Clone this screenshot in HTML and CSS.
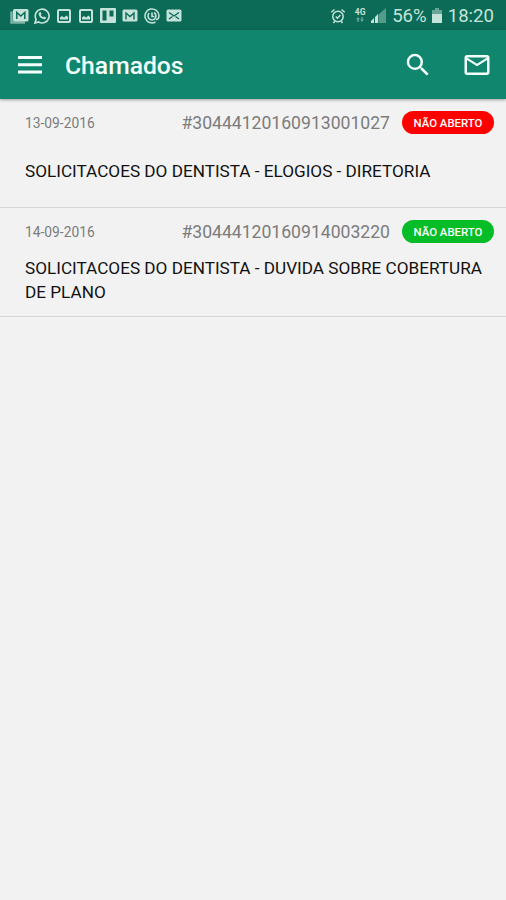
FILE: index.html
```html
<!DOCTYPE html>
<html lang="pt-BR">
<head>
    <meta charset="UTF-8">
    <meta name="viewport" content="width=device-width, initial-scale=1.0">
    <title>Chamados</title>
    <link rel="stylesheet" href="styles.css">
</head>
<body>
    <div class="status-bar">
        <div class="notifications">
            <svg class="wide" width="20" height="16" viewBox="0 0 20 16">
                <path d="M1.500 3.500v11H15" fill="none" stroke="currentColor" stroke-width="2.500" opacity=".6"/>
                <rect x="3" y="1" width="15.500" height="12.500" rx="1.500" fill="currentColor"/>
                <path d="M6.800 11V4.500l4 3.500 4-3.500V11" fill="none" stroke="#0b6b56" stroke-width="1.500"/>
            </svg>
            <svg width="16" height="16" viewBox="0 0 16 16" fill="none" stroke="currentColor">
                <path d="M1 15l1.100-3.700A6.900 6.900 0 1 1 4.700 14z" stroke-width="1.700"/>
                <path d="M5.200 4.400l1.500-.3.800 2-.8.900c.6 1.100 1.400 1.800 2.500 2.300l1-.9 1.900 1c-.2 1.500-1.300 2-2.600 1.700C7 10.400 5.300 8.800 4.700 6.400c-.1-.8 0-1.500.5-2z" fill="currentColor" stroke="none"/>
            </svg>
            <svg width="16" height="16" viewBox="0 0 16 16">
                <rect x="2" y="2" width="12" height="12" rx="1" fill="none" stroke="currentColor" stroke-width="2"/>
                <path d="M4 11.500V9.500l2-1.500 2 1.500 2.500-2L12 9v2.500z" fill="currentColor"/>
            </svg>
            <svg width="16" height="16" viewBox="0 0 16 16">
                <rect x="2" y="2" width="12" height="12" rx="1" fill="none" stroke="currentColor" stroke-width="2"/>
                <path d="M4 11.500V9.500l2-1.500 2 1.500 2.500-2L12 9v2.500z" fill="currentColor"/>
            </svg>
            <svg width="16" height="16" viewBox="0 0 16 16">
                <path fill="currentColor" fill-rule="evenodd" d="M1 0h14a1 1 0 0 1 1 1v13a1 1 0 0 1-1 1H1a1 1 0 0 1-1-1V1a1 1 0 0 1 1-1zM2.500 2.500v10h4V2.500zM9.500 2.500v6h4V2.500z"/>
            </svg>
            <svg width="16" height="16" viewBox="0 0 16 16">
                <rect x="0.500" y="1.500" width="15" height="12" rx="1.500" fill="currentColor"/>
                <path d="M4 11.500V5L8 8.500 12 5v6.500" fill="none" stroke="#0b6b56" stroke-width="1.400"/>
            </svg>
            <svg width="16" height="16" viewBox="0 0 16 16" fill="none" stroke="currentColor">
                <path d="M11.500 14A7 7 0 1 1 15 7.500c0 3-1.500 4.300-3.200 3.800" stroke-width="1.500"/>
                <path d="M5.300 5A4 4 0 1 0 12 8c0-1.700-.8-2.800-2-3.500M8 4.500v4h2.500" stroke-width="1.600"/>
            </svg>
            <svg width="16" height="16" viewBox="0 0 16 16">
                <rect x="0.500" y="1.500" width="15" height="12" rx="1.500" fill="currentColor"/>
                <path d="M3 4.500l5 3.500 5-3.500M3 11l3.500-2.500M13 11L9.500 8.500" fill="none" stroke="#0b6b56" stroke-width="1.400"/>
            </svg>
        </div>
        <div class="system">
            <svg class="alarm" width="16" height="16" viewBox="0 0 16 16" fill="none" stroke="currentColor" stroke-width="1.500">
                <circle cx="8" cy="8.500" r="5.200"/>
                <path d="M1.300 4.300L4.500 1.500M14.700 4.300L11.500 1.500M3.500 15l1.200-1.700M12.500 15l-1.200-1.700M5.700 8.500l1.700 1.700 3-3.200"/>
            </svg>
            <div class="network">
                <span>4G</span>
                <svg width="8" height="6" viewBox="0 0 8 6" fill="currentColor" opacity=".5">
                    <path d="M2 0l2 2.500H2.700V5H1.300V2.500H0zM6 5L4 2.500h1.300V0h1.400v2.500H8z"/>
                </svg>
            </div>
            <svg class="signal" width="15" height="15" viewBox="0 0 15 15" fill="currentColor">
                <path d="M0 15v-2l3-3v5zM4 15V9l3-3v9z"/>
                <path d="M7.500 15V6.500L15 0v15z" opacity=".4"/>
            </svg>
            <span class="percent">56%</span>
            <svg class="battery" width="10" height="15" viewBox="0 0 10 15" fill="currentColor">
                <path d="M3 0h4v2h3v4H0V2h3z" opacity=".5"/>
                <path d="M0 6h10v9H0z"/>
            </svg>
            <span class="time">18:20</span>
        </div>
    </div>

    <header class="toolbar">
        <svg class="menu" width="24" height="18" viewBox="0 0 24 18" fill="currentColor">
            <path d="M0 0h24v3H0zM0 7.200h24v3H0zM0 14.400h24v3H0z"/>
        </svg>
        <h1>Chamados</h1>
        <svg class="search" width="30" height="30" viewBox="0 0 24 24" fill="currentColor">
            <path d="M15.500 14h-.79l-.28-.27A6.471 6.471 0 0 0 16 9.500 6.500 6.500 0 1 0 9.500 16c1.610 0 3.090-.59 4.230-1.570l.27.28v.79l5 4.990L20.490 19l-4.990-5zm-6 0C7.010 14 5 11.990 5 9.500S7.010 5 9.500 5 14 7.010 14 9.500 11.990 14 9.500 14z"/>
        </svg>
        <svg width="30" height="30" viewBox="0 0 24 24" fill="currentColor">
            <path d="M20 4H4c-1.100 0-1.990.9-1.990 2L2 18c0 1.100.9 2 2 2h16c1.100 0 2-.9 2-2V6c0-1.100-.9-2-2-2zm0 14H4V8l8 5 8-5v10zm-8-7L4 6h16l-8 5z"/>
        </svg>
    </header>

    <main>
        <div class="ticket">
            <div class="ticket-header">
                <span class="date">13-09-2016</span>
                <span class="protocol">#30444120160913001027</span>
                <span class="badge badge-red">NÃO ABERTO</span>
            </div>
            <p class="subject">SOLICITACOES DO DENTISTA - ELOGIOS - DIRETORIA</p>
        </div>
        <div class="ticket">
            <div class="ticket-header">
                <span class="date">14-09-2016</span>
                <span class="protocol">#30444120160914003220</span>
                <span class="badge badge-green">NÃO ABERTO</span>
            </div>
            <p class="subject">SOLICITACOES DO DENTISTA - DUVIDA SOBRE COBERTURA DE PLANO</p>
        </div>
    </main>
</body>
</html>
```

FILE: styles.css
```css
* {
    box-sizing: border-box;
}
body {
    margin: 0;
    min-height: 100vh;
    background-color: #f2f2f2;
    font-family: Roboto, "Liberation Sans", sans-serif;
    color: #111;
}
svg {
    display: block;
    flex: none;
}
.status-bar {
    display: flex;
    justify-content: space-between;
    align-items: center;
    height: 30px;
    padding: 1px 12px 0 10px;
    background-color: #0b6b56;
    color: #c5e3da;
}
.notifications {
    display: flex;
    gap: 6px;
}
.notifications .wide {
    margin-right: -2px;
}
.system {
    display: flex;
    align-items: center;
    font-size: 18.6px;
    line-height: 30px;
}
.network {
    display: flex;
    flex-direction: column;
    align-items: center;
    width: 14px;
    margin: 0 4px 0 7px;
    font-size: 8.5px;
    font-weight: bold;
    line-height: 9px;
}
.signal {
    margin-right: 6px;
}
.battery {
    margin: 0 6px 0 5px;
}
.toolbar {
    position: relative;
    display: flex;
    align-items: center;
    height: 69px;
    padding: 0 14px 0 18px;
    background-color: #11866f;
    color: #f4fffc;
    box-shadow: 0 1px 3px rgba(0,0,0,0.35);
}
.toolbar h1 {
    flex: 1;
    margin: 2px 0 0 23px;
    font-size: 24.7px;
    font-weight: 500;
    line-height: 30px;
}
.search {
    margin-right: 29px;
}
.ticket {
    display: flex;
    flex-direction: column;
    height: 109px;
    padding: 12px 12px 0 25px;
    border-bottom: 1px solid #d6d6d6;
}
.ticket-header {
    display: flex;
    align-items: center;
    height: 24px;
    color: #7c7c7c;
}
.date {
    flex: 1;
    font-size: 13.8px;
}
.protocol {
    font-size: 17.6px;
}
.badge {
    width: 92px;
    height: 23px;
    margin: 0 0 1px 12px;
    border-radius: 12px;
    color: white;
    font-size: 11.4px;
    font-weight: 500;
    line-height: 24px;
    text-align: center;
}
.badge-red {
    background-color: #fe0000;
}
.badge-green {
    background-color: #04bd27;
}
.subject {
    display: flex;
    align-items: center;
    height: 48px;
    margin: 12px 0 0;
    font-size: 17.17px;
    line-height: 24px;
}
```
